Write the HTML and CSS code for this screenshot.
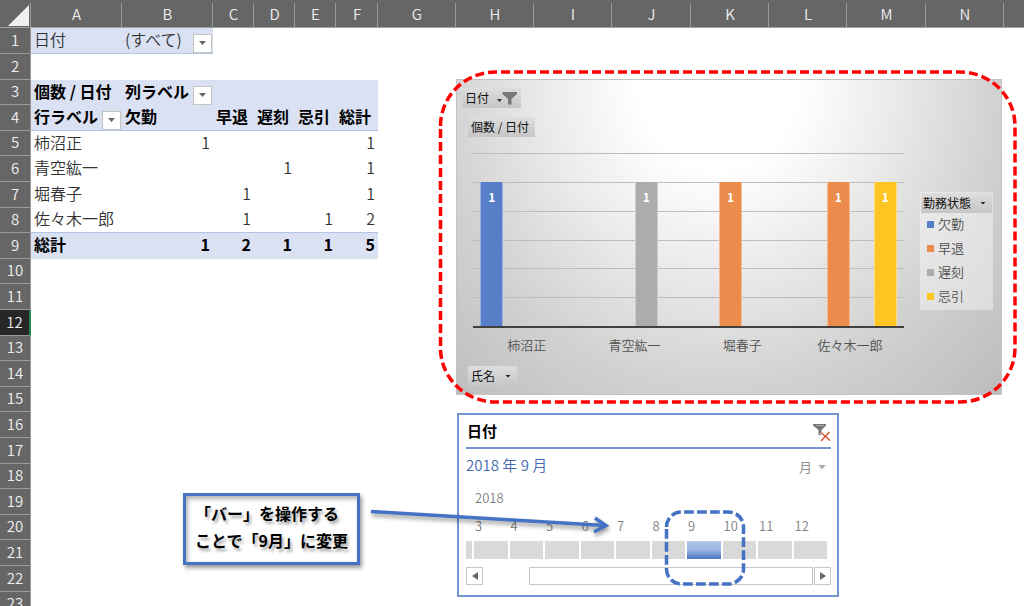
FILE: index.html
```html
<!DOCTYPE html>
<html lang="ja">
<head>
<meta charset="utf-8">
<meta name="viewport" content="width=device-width, initial-scale=1">
<title>勤務状態 ピボット集計</title>
<link rel="stylesheet" href="styles.css">
</head>
<body>
<main class="workbook">
  <table class="grid">
    <colgroup>
      <col class="col-head"><col class="col-wide"><col class="col-wide">
      <col class="col-narrow"><col class="col-narrow"><col class="col-narrow"><col class="col-narrow-plus">
      <col class="col-std"><col class="col-std"><col class="col-std"><col class="col-std-plus"><col class="col-std"><col class="col-std"><col class="col-std-plus"><col class="col-std">
      <col>
    </colgroup>
    <thead>
      <tr>
        <th class="corner"><svg width="21" height="21" viewBox="0 0 21 21" aria-hidden="true"><path d="M21 0V21H0Z" fill="#f0f0f0"/></svg></th>
        <th scope="col">A</th><th scope="col">B</th><th scope="col">C</th><th scope="col">D</th><th scope="col">E</th><th scope="col">F</th><th scope="col">G</th><th scope="col">H</th><th scope="col">I</th><th scope="col">J</th><th scope="col">K</th><th scope="col">L</th><th scope="col">M</th><th scope="col">N</th><th></th>
      </tr>
    </thead>
    <tbody>
      <tr><th scope="row">1</th><td class="fill line">日付</td><td class="fill line"><div class="field"><span>(すべて)</span><button class="drop" type="button" aria-label="日付の絞り込み"></button></div></td><td colspan="13"></td></tr>
      <tr><th scope="row">2</th><td colspan="15"></td></tr>
      <tr class="strong"><th scope="row">3</th><td class="fill">個数 / 日付</td><td class="fill"><div class="field"><span>列ラベル</span><button class="drop" type="button" aria-label="列ラベルの絞り込み"></button></div></td><td class="fill" colspan="4"></td><td colspan="9"></td></tr>
      <tr class="strong"><th scope="row">4</th><td class="fill line"><div class="field"><span>行ラベル</span><button class="drop" type="button" aria-label="行ラベルの絞り込み"></button></div></td><td class="fill line">欠勤</td><td class="fill line">早退</td><td class="fill line">遅刻</td><td class="fill line">忌引</td><td class="fill line">総計</td><td colspan="9"></td></tr>
      <tr><th scope="row">5</th><td>柿沼正</td><td class="num">1</td><td></td><td></td><td></td><td class="num">1</td><td colspan="9"></td></tr>
      <tr><th scope="row">6</th><td>青空紘一</td><td></td><td></td><td class="num">1</td><td></td><td class="num">1</td><td colspan="9"></td></tr>
      <tr><th scope="row">7</th><td>堀春子</td><td></td><td class="num">1</td><td></td><td></td><td class="num">1</td><td colspan="9"></td></tr>
      <tr><th scope="row">8</th><td class="line">佐々木一郎</td><td class="line"></td><td class="num line">1</td><td class="line"></td><td class="num line">1</td><td class="num line">2</td><td colspan="9"></td></tr>
      <tr class="strong"><th scope="row">9</th><td class="fill">総計</td><td class="fill num">1</td><td class="fill num">2</td><td class="fill num">1</td><td class="fill num">1</td><td class="fill num">5</td><td colspan="9"></td></tr>
      <tr><th scope="row">10</th><td colspan="15"></td></tr>
      <tr><th scope="row">11</th><td colspan="15"></td></tr>
      <tr class="current"><th scope="row">12</th><td colspan="15"></td></tr>
      <tr><th scope="row">13</th><td colspan="15"></td></tr>
      <tr><th scope="row">14</th><td colspan="15"></td></tr>
      <tr><th scope="row">15</th><td colspan="15"></td></tr>
      <tr><th scope="row">16</th><td colspan="15"></td></tr>
      <tr><th scope="row">17</th><td colspan="15"></td></tr>
      <tr><th scope="row">18</th><td colspan="15"></td></tr>
      <tr><th scope="row">19</th><td colspan="15"></td></tr>
      <tr><th scope="row">20</th><td colspan="15"></td></tr>
      <tr><th scope="row">21</th><td colspan="15"></td></tr>
      <tr><th scope="row">22</th><td colspan="15"></td></tr>
      <tr><th scope="row">23</th><td colspan="15"></td></tr>
    </tbody>
  </table>

  <section class="chart" aria-label="個数 / 日付">
    <div class="chart-fields">
      <button class="chip" type="button">日付
        <svg class="chip-filter" width="22" height="14" viewBox="0 0 22 14" aria-hidden="true"><path d="M0 8H5L2.500 11Z" fill="#333"/><path d="M5.500 1H20V3L14.500 8V13.500H11V8L5.500 3Z" fill="#777"/></svg>
      </button>
      <button class="chip chip-inset" type="button">個数 / 日付</button>
    </div>
    <div class="chart-body">
      <div class="plot">
        <div class="plot-area">
          <div class="gridlines"><i></i><i></i><i></i><i></i><i></i><i></i></div>
          <div class="bars">
            <div class="group"><span class="bar blue" style="height:83.33%">1</span></div>
            <div class="group"><span class="bar gray" style="height:83.33%">1</span></div>
            <div class="group"><span class="bar orange" style="height:83.33%">1</span></div>
            <div class="group"><span class="bar orange" style="height:83.33%">1</span><span class="bar yellow" style="height:83.33%">1</span></div>
          </div>
        </div>
        <div class="categories"><span>柿沼正</span><span>青空紘一</span><span>堀春子</span><span>佐々木一郎</span></div>
      </div>
      <div class="legend">
        <button class="chip chip-legend" type="button">勤務状態<span class="caret"></span></button>
        <ul>
          <li><i class="key blue"></i>欠勤</li>
          <li><i class="key orange"></i>早退</li>
          <li><i class="key gray"></i>遅刻</li>
          <li><i class="key yellow"></i>忌引</li>
        </ul>
      </div>
    </div>
    <button class="chip chip-inset" type="button">氏名<span class="caret"></span></button>
  </section>

  <svg class="outline-red" width="580" height="336" viewBox="0 0 580 336" aria-hidden="true">
    <path d="M2.500 57A55 54 0 0 1 57.500 3H522A55 54 0 0 1 577 57V279A55 54 0 0 1 522 333H57.500A55 54 0 0 1 2.500 279Z"/>
  </svg>

  <section class="timeline" aria-label="日付タイムライン">
    <header class="timeline-head">
      <h2>日付</h2>
      <button class="clear" type="button" aria-label="フィルターのクリア">
        <svg width="18" height="18" viewBox="0 0 18 18" aria-hidden="true"><path d="M0 0H13V1.500L8.500 6V11H5.500V6L0 1.500Z" fill="#777"/><path d="M3 1.500H11" stroke="#aaa"/><path d="M8 8.500L17 16.500M16.500 8L8 17" stroke="#fff" stroke-width="3"/><path d="M8 8.500L17 16.500M16.500 8L8 17" stroke="#dd5535" stroke-width="1.500"/></svg>
      </button>
    </header>
    <div class="period"><span class="period-value">2018 年 9 月</span><button class="level" type="button">月<span class="caret"></span></button></div>
    <div class="year">2018</div>
    <div class="months labels"><span></span><span>3</span><span>4</span><span>5</span><span>6</span><span>7</span><span>8</span><span>9</span><span>10</span><span>11</span><span>12</span></div>
    <div class="months tiles"><i></i><i></i><i></i><i></i><i></i><i></i><i></i><i class="selected"></i><i></i><i></i><i></i></div>
    <div class="scroll">
      <button type="button" aria-label="前へ"><svg width="6" height="8" viewBox="0 0 6 8" aria-hidden="true"><path d="M6 0V8L0 4Z" fill="#666"/></svg></button>
      <div class="track"><div class="thumb"></div></div>
      <button type="button" aria-label="次へ"><svg width="6" height="8" viewBox="0 0 6 8" aria-hidden="true"><path d="M0 0V8L6 4Z" fill="#666"/></svg></button>
    </div>
  </section>

  <svg class="outline-blue" width="82" height="78" viewBox="0 0 82 78" aria-hidden="true">
    <path d="M2.500 18A15 15 0 0 1 17.500 3H64.500A15 15 0 0 1 79.500 18V60A15 15 0 0 1 64.500 75H17.500A15 15 0 0 1 2.500 60Z"/>
  </svg>

  <p class="callout">「バー」を操作する<br>ことで「9月」に変更</p>
  <svg class="arrow" width="244" height="36" viewBox="0 0 244 36" aria-hidden="true">
    <path d="M1 6.500L235 20.500"/><path d="M225 13L236 20.500L224 27"/>
  </svg>
</main>
</body>
</html>
```
FILE: styles.css
```css
* { box-sizing: border-box; }

body {
  margin: 0;
  background: #fff;
  color: #333;
  font-family: "Noto Sans CJK JP", "Noto Sans", sans-serif;
  font-size: 16px;
  font-weight: 350;
  line-height: 20px;
  text-spacing-trim: space-all;
}

button {
  margin: 0;
  padding: 0;
  border: 0;
  background: none;
  color: inherit;
  font: inherit;
  white-space: nowrap;
}

i { display: block; }

.workbook {
  position: relative;
  height: 100vh;
  overflow: hidden;
}

/* Worksheet */
.grid {
  width: 100%;
  table-layout: fixed;
  border-spacing: 0;
}

.col-head { width: 31px; }
.col-wide { width: 91px; }
.col-narrow { width: 41px; }
.col-narrow-plus { width: 42px; }
.col-std { width: 78px; }
.col-std-plus { width: 79px; }

.grid th {
  padding: 0 0 2px;
  background: #666;
  color: #eee;
  font-size: 15px;
  font-weight: 350;
  text-align: center;
}

.grid thead th {
  height: 28px;
  padding: 0;
  border-bottom: 1px solid #a0a0a0;
  background: linear-gradient(#999, #999) right bottom / 1px 24px no-repeat #666;
}

.grid thead th:last-child { background: #666; }

.grid thead .corner {
  padding: 5px 2px 1px 8px;
  line-height: 0;
}

.grid tbody tr { height: 26px; }
.grid tbody tr:nth-child(5n+3),
.grid tbody tr:nth-child(5n+5) { height: 25px; }

.grid tbody th {
  border-right: 1px solid #999;
  border-bottom: 1px solid #999;
}

.grid .current th {
  border-right: 2px solid #1f8450;
  background: #262626;
}

.grid td {
  padding: 0 3px 4px;
  white-space: nowrap;
}

.grid .fill { background: #d9e1f2; }
.grid .line { border-bottom: 1px solid #b4c6e7; }
.grid .strong td { color: #000; font-weight: 700; }
.grid .num { text-align: right; }

.field {
  display: flex;
  justify-content: space-between;
  height: 20px;
  margin-right: -2px;
}

.drop {
  display: grid;
  place-items: center;
  flex: none;
  width: 19px;
  height: 19px;
  margin-top: 5px;
  border: 1px solid #c4c4c4;
  background: #fff;
}

.drop::after,
.caret {
  width: 7px;
  height: 4px;
  background: #666;
  clip-path: polygon(0 0, 100% 0, 50% 100%);
  content: "";
}

/* Pivot chart */
.chart {
  position: absolute;
  top: 79px;
  left: 456px;
  display: flex;
  flex-direction: column;
  align-items: flex-start;
  width: 546px;
  padding: 8px 8px 8px 5px;
  border: 1px solid #c4c4c4;
  background: radial-gradient(ellipse farthest-corner at 48% 0, #fff 0, #fff 20%, #ebebeb 43%, #d1d1d1 70%, #bcbcbc 100%);
}

.chart-fields {
  display: flex;
  flex-direction: column;
  align-items: flex-start;
  gap: 9px;
}

.chip {
  display: flex;
  align-items: center;
  gap: 10px;
  height: 20px;
  padding: 0 6px 0 3px;
  background: linear-gradient(#dedede, #c6c6c6);
  color: #111;
  font-size: 12px;
  font-weight: 400;
}

.chip-inset { margin-left: 6px; }
.chip-filter { margin-left: -2px; margin-right: -4px; }
.chip .caret { width: 6px; height: 3px; background: #222; }

.chart-body {
  display: flex;
  align-items: flex-start;
  align-self: stretch;
  gap: 16px;
  margin: 16px 0 10px 11px;
}

.plot { flex: 1; }

.plot-area {
  display: grid;
  height: 175px;
  border-bottom: 2px solid #404040;
}

.gridlines,
.bars { grid-area: 1 / 1; }

.gridlines {
  display: grid;
  grid-template-rows: repeat(6, 1fr);
}

.gridlines i { border-top: 1px solid #bdbdbd; }

.bars {
  display: grid;
  grid-template-columns: repeat(4, 1fr);
}

.group {
  display: grid;
  grid-template-columns: repeat(4, 1fr);
  align-items: end;
  padding: 0 7px;
}

.bar {
  grid-row: 1;
  padding-top: 5px;
  border: solid rgba(255, 255, 255, 0.4);
  border-width: 0 1px;
  color: #fff;
  font-size: 12px;
  font-weight: 700;
  text-align: center;
}

.blue { background-color: #577fc8; }
.orange { background-color: #ec8c4c; }
.gray { background-color: #acacac; }
.yellow { background-color: #fcc521; }

.bar.blue { grid-column: 1; }
.bar.orange { grid-column: 2; }
.bar.gray { grid-column: 3; }
.bar.yellow { grid-column: 4; }

.categories {
  display: grid;
  grid-template-columns: repeat(4, 1fr);
  padding: 7px 0 1px;
  color: #505050;
  font-size: 13px;
  text-align: center;
}

.legend {
  width: 73px;
  margin-top: 39px;
  padding: 1px 1px 4px;
  background: rgba(255, 255, 255, 0.4);
  color: #505050;
  font-size: 13px;
}

.chip-legend {
  justify-content: space-between;
  gap: 0;
  width: 100%;
  padding-left: 2px;
}

.legend ul {
  display: grid;
  gap: 4px;
  margin: 0;
  padding: 1px 0 0 6px;
  list-style: none;
}

.legend li {
  display: flex;
  align-items: center;
  gap: 4px;
}

.key { width: 7px; height: 7px; }

.outline-red {
  position: absolute;
  top: 69px;
  left: 438px;
  fill: none;
  stroke: #f00;
  stroke-width: 3.5;
  stroke-dasharray: 9 4;
}

/* Timeline slicer */
.timeline {
  position: absolute;
  top: 413px;
  left: 457px;
  width: 382px;
  padding: 3px 6px 10px 7px;
  border: 2px solid #7394d2;
  background: #fff;
  color: #808080;
  font-size: 13px;
}

.timeline-head {
  display: flex;
  justify-content: space-between;
  align-items: center;
  height: 31px;
  border-bottom: 2px solid #7394d2;
}

.timeline-head h2 {
  margin: 0;
  padding: 0 0 3px 1px;
  color: #000;
  font-size: 15px;
  font-weight: 700;
}

.clear { height: 18px; }
.clear svg { display: block; }

.period {
  display: flex;
  justify-content: space-between;
  padding: 6px 5px 0 0;
}

.period-value { color: #4469b0; font-size: 15px; }

.level {
  display: flex;
  align-items: center;
  gap: 6px;
  padding-top: 2px;
}

.level .caret { width: 8px; height: 5px; background: #aaa; }

.year { padding: 11px 0 0 9px; }

.months {
  display: grid;
  grid-template-columns: 6px repeat(10, 1fr);
  gap: 2px;
  margin-right: 4px;
}

.labels { padding-top: 8px; }
.labels span { padding-left: 1px; }
.tiles { padding-top: 5px; }
.tiles i { height: 18px; background: #d9d9d9; }
.tiles .selected { background: linear-gradient(#b4c6ea, #9db5e2 50%, #4a74c4); }

.scroll {
  display: flex;
  gap: 1px;
  margin-top: 8px;
}

.scroll button {
  display: grid;
  place-items: center;
  width: 17px;
  height: 18px;
  border: 1px solid #c8c8c8;
}

.track { flex: 1; }

.thumb {
  height: 18px;
  margin-left: 45px;
  border: 1px solid #c8c8c8;
}

.outline-blue {
  position: absolute;
  top: 509px;
  left: 664px;
  fill: none;
  stroke: #4472c4;
  stroke-width: 3.5;
  stroke-dasharray: 9.7 3.3;
}

/* Annotation */
.callout {
  position: absolute;
  top: 493px;
  left: 183px;
  margin: 0;
  padding: 4px 9px 8px;
  border: 3px solid #4472c4;
  color: #000;
  font-weight: 700;
  line-height: 27px;
  white-space: nowrap;
  text-shadow: 2px 3px 3px rgba(0, 0, 0, 0.35);
  box-shadow: 2px 3px 4px rgba(0, 0, 0, 0.4), inset 2px 3px 4px rgba(0, 0, 0, 0.3);
}

.arrow {
  position: absolute;
  top: 505px;
  left: 370px;
  fill: none;
  stroke: #4472c4;
  stroke-width: 3.5;
  filter: drop-shadow(1px 3px 2px rgba(0, 0, 0, 0.4));
}
```
